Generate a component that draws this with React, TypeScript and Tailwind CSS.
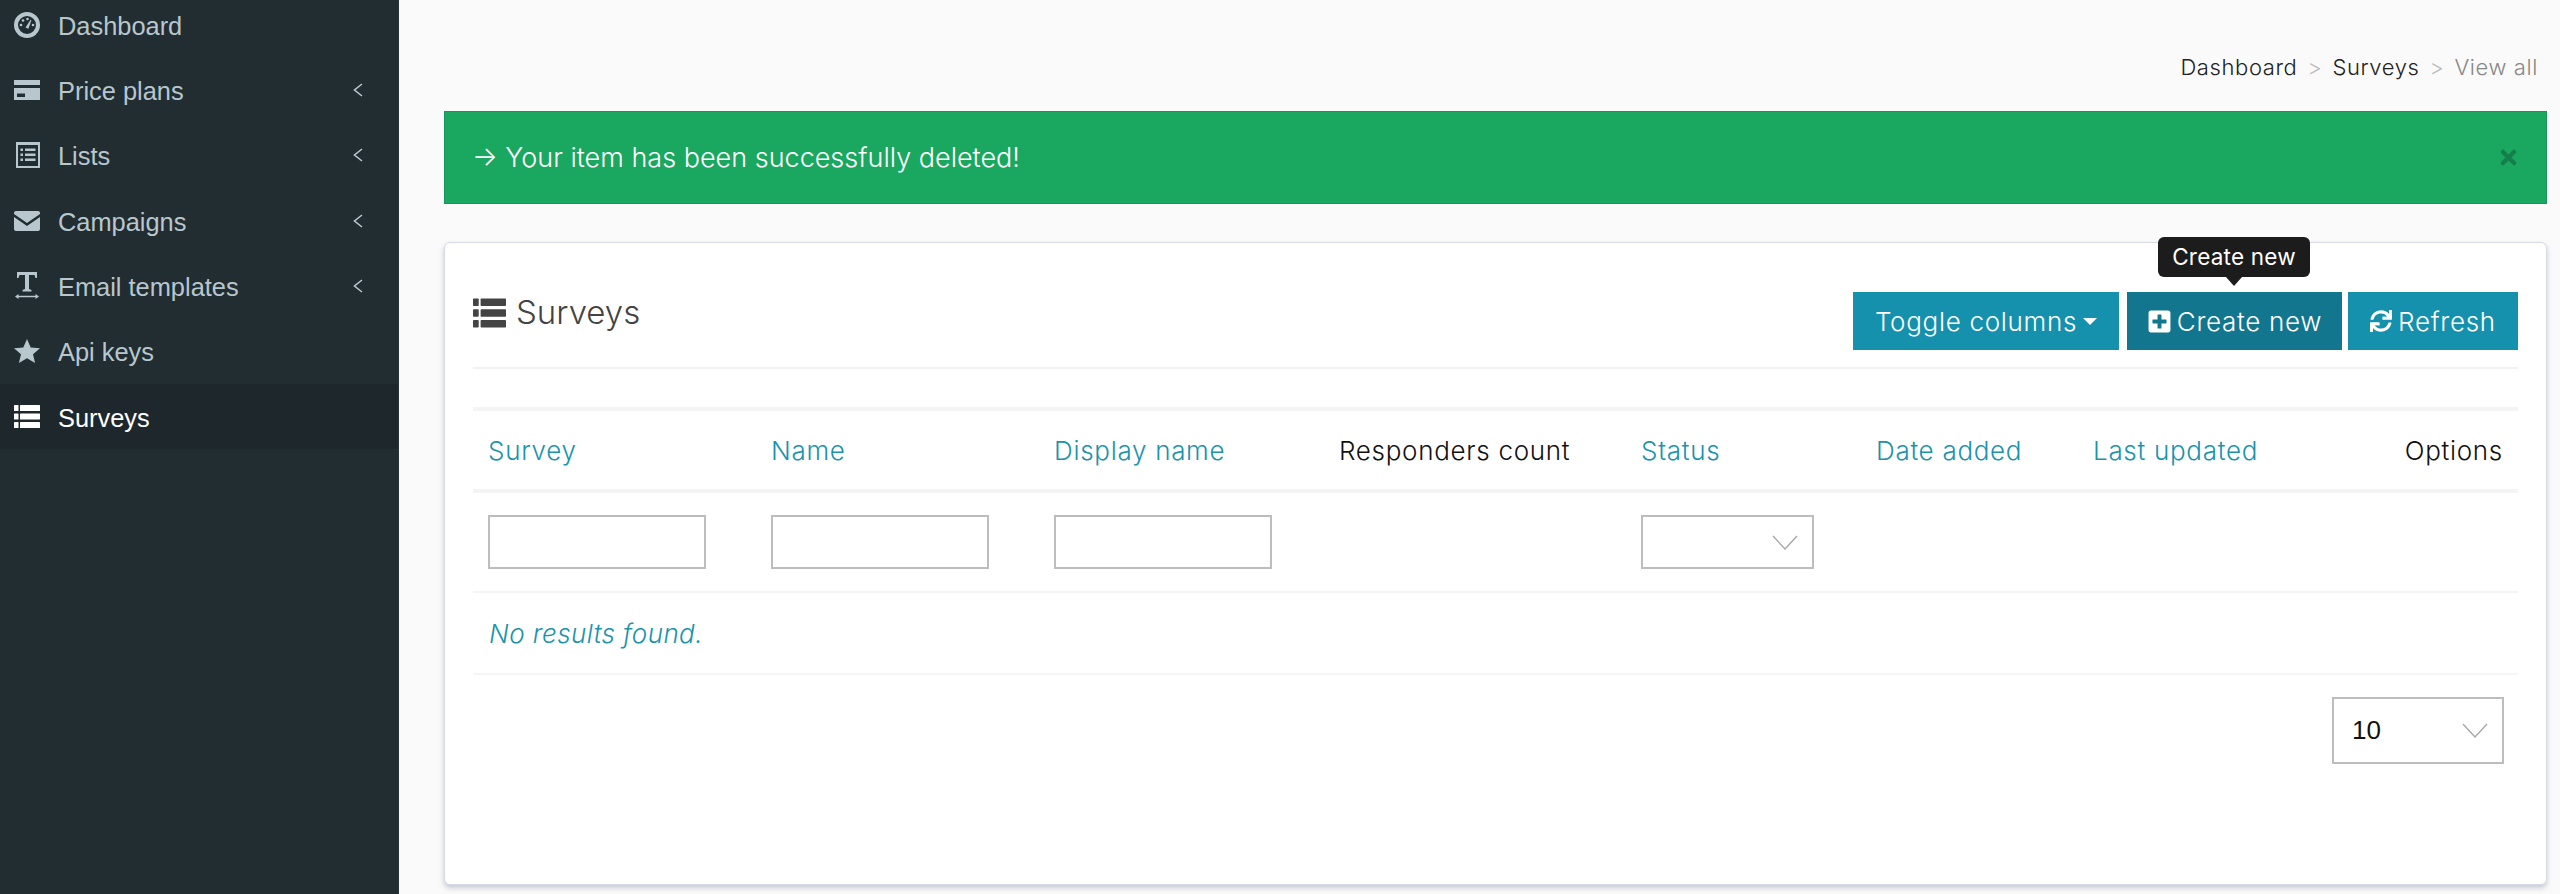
import { FaPlusSquare, FaSync, FaTimes } from "react-icons/fa";

function ListIcon({ className }: { className?: string }) {
  return (
    <svg viewBox="0 0 26 23" className={className} fill="currentColor">
      <rect x="0" y="0" width="4.5" height="6" rx="0.6" />
      <rect x="6" y="0" width="20" height="6" rx="0.6" />
      <rect x="0" y="8.5" width="4.5" height="6" rx="0.6" />
      <rect x="6" y="8.5" width="20" height="6" rx="0.6" />
      <rect x="0" y="17" width="4.5" height="6" rx="0.6" />
      <rect x="6" y="17" width="20" height="6" rx="0.6" />
    </svg>
  );
}

function GaugeIcon() {
  return (
    <svg viewBox="0 0 26 26" className="h-[26px] w-[26px]" fill="currentColor">
      <circle cx="13" cy="13" r="11" fill="none" stroke="currentColor" strokeWidth="4" />
      <circle cx="7" cy="13" r="1.3" />
      <circle cx="9" cy="8.5" r="1.3" />
      <circle cx="13.5" cy="7" r="1.3" />
      <circle cx="19" cy="13" r="1.3" />
      <path d="M11.5 15.5 L16.6 7.8 L17.4 8.3 L14.4 16.8 Z" />
    </svg>
  );
}

function CardIcon() {
  return (
    <svg viewBox="0 0 26 20" className="h-[20px] w-[26px]" fill="currentColor">
      <path d="M0 0h26v5H0z" />
      <path fillRule="evenodd" d="M0 8h26v12H0zM3 13.5v3.5h8v-3.5z" />
    </svg>
  );
}

function ListAltIcon() {
  return (
    <svg viewBox="0 0 24 26" className="ml-[2px] h-[26px] w-[24px]" fill="currentColor">
      <path fillRule="evenodd" d="M0 0h24v26H0zM2 3v21h20V3z" />
      <path d="M4.5 6.5h2.5V9H4.500zM9 6.500h10.500V9H9zM4.500 11.500h2.500V14H4.500zM9 11.500h10.500V14H9zM4.500 16.500h2.500V19H4.500zM9 16.500h10.500V19H9z" />
    </svg>
  );
}

function EnvelopeIcon() {
  return (
    <svg viewBox="0 0 26 20" className="h-[20px] w-[26px]" fill="currentColor">
      <path d="M2 0h22a2 2 0 0 1 2 2v1L13 12 0 3V2a2 2 0 0 1 2-2z" />
      <path d="M0 6l13 9 13-9v12a2 2 0 0 1-2 2H2a2 2 0 0 1-2-2z" />
    </svg>
  );
}

function TextWidthIcon() {
  return (
    <svg viewBox="0 0 24 27" className="h-[27px] w-[24px]" fill="currentColor">
      <path d="M2 0h20v6h-1.500l-1-3H14v14l2.500 1v1.500h-9V18l2.500-1V3H4.500l-1 3H2z" />
      <path d="M0 24.500l3.500-2.500v1.800h17V22l3.500 2.500L20.500 27v-1.800h-17V27z" />
    </svg>
  );
}

function StarIcon() {
  return (
    <svg viewBox="0 0 26 24" className="-ml-[1px] h-[24px] w-[26px]" fill="currentColor">
      <path d="M13 0l3.700 8.400 9.300.8-7 6 2.100 8.800L13 19.300 4.900 24 7 15.200l-7-6 9.300-.8z" />
    </svg>
  );
}

function SelectChevron() {
  return (
    <svg viewBox="0 0 26 15" className="h-[15px] w-[26px]" fill="none" stroke="#a8a8a8" strokeWidth="1.4">
      <path d="M1 1 L13 14 L25 1" />
    </svg>
  );
}

function MenuChevron() {
  return (
    <svg viewBox="0 0 10 14" className="ml-auto mr-[35px] h-[14px] w-[10px]" fill="none" stroke="currentColor" strokeWidth="1.6">
      <path d="M9 1 L1.500 7 L9 13" />
    </svg>
  );
}

const menu = [
  { label: "Dashboard", icon: <GaugeIcon />, sub: false },
  { label: "Price plans", icon: <CardIcon />, sub: true },
  { label: "Lists", icon: <ListAltIcon />, sub: true },
  { label: "Campaigns", icon: <EnvelopeIcon />, sub: true },
  { label: "Email templates", icon: <TextWidthIcon />, sub: true },
  { label: "Api keys", icon: <StarIcon />, sub: false },
  { label: "Surveys", icon: <ListIcon className="h-[23px] w-[26px]" />, sub: false, active: true },
];

function Sidebar() {
  return (
    <aside className="h-[894px] w-[399px] shrink-0 overflow-hidden border-r border-r-[#2a353a] bg-[#222d32] font-['Liberation_Sans',sans-serif] text-[25.4px]">
      <nav className="-mt-[8px]">
        {menu.map((item) => (
          <div
            key={item.label}
            className={
              item.active
                ? "flex h-[65.33px] items-center bg-[#1e282c] pl-[14px] text-white"
                : "flex h-[65.33px] items-center pl-[14px] text-[#b8c7ce]"
            }
          >
            <span className="flex w-[26px] justify-center">{item.icon}</span>
            <span className="ml-[18px] pt-[2px]">{item.label}</span>
            {item.sub && <MenuChevron />}
          </div>
        ))}
      </nav>
    </aside>
  );
}

const columns = [
  { label: "Survey", w: "w-[283px]", link: true },
  { label: "Name", w: "w-[283px]", link: true },
  { label: "Display name", w: "w-[285px]", link: true },
  { label: "Responders count", w: "w-[302px]", link: false },
  { label: "Status", w: "w-[235px]", link: true },
  { label: "Date added", w: "w-[217px]", link: true },
  { label: "Last updated", w: "w-[220px]", link: true },
  { label: "Options", w: "", link: false },
];

function SurveysTable() {
  return (
    <table className="mt-[38px] w-full table-fixed border-t-[4px] border-t-[#f4f4f4] text-[26px] font-light tracking-[0.7px]">
      <thead>
        <tr className="h-[82px] border-b-[4px] border-b-[#f4f4f4]">
          {columns.map((col, i) => (
            <th
              key={col.label}
              className={`${col.w} px-[15px] font-light ${i === 7 ? "text-right" : "text-left"} ${col.link ? "text-[#1a93ad]" : "text-[#111]"}`}
            >
              {col.label}
            </th>
          ))}
        </tr>
      </thead>
      <tbody>
        <tr className="h-[101px] border-b-[2px] border-b-[#f4f4f4]">
          <td className="px-[15px]"><input className="block h-[54px] w-[218px] border-2 border-[#bdbdbd] bg-white" /></td>
          <td className="px-[15px]"><input className="block h-[54px] w-[218px] border-2 border-[#bdbdbd] bg-white" /></td>
          <td className="px-[15px]"><input className="block h-[54px] w-[218px] border-2 border-[#bdbdbd] bg-white" /></td>
          <td />
          <td className="px-[15px]">
            <div className="flex h-[54px] w-[173px] items-center justify-end border-2 border-[#bdbdbd] pr-[14px]">
              <SelectChevron />
            </div>
          </td>
          <td />
          <td />
          <td />
        </tr>
        <tr className="h-[82px] border-b-[2px] border-b-[#f5f5f5]">
          <td colSpan={8} className="px-[16px] italic tracking-[0.4px] text-[#1a93ad]">No results found.</td>
        </tr>
      </tbody>
    </table>
  );
}

export default function App() {
  return (
    <div className="flex h-[894px] w-full overflow-hidden bg-[#fafafa] font-['Inter',sans-serif] text-[#333]">
      <Sidebar />
      <main className="min-w-0 flex-1 pl-[45px] pr-[13px]">
        <div className="flex h-[111px] items-start justify-end pr-[9px] pt-[53px] text-[22px] font-light leading-[28px] tracking-[0.6px]">
          <span className="text-[#222]">Dashboard</span>
          <span className="mx-[10px] text-[#bbb]">&gt;</span>
          <span className="text-[#222]">Surveys</span>
          <span className="mx-[10px] text-[#bbb]">&gt;</span>
          <span className="text-[#888]">View all</span>
        </div>

        <div className="flex h-[93px] items-center justify-between border border-[#179659] bg-[#1aa75f] pl-[27px] pr-[26px] text-[27px] font-light text-white">
          <span className="pt-[2px]">→ Your item has been successfully deleted!</span>
          <FaTimes className="h-[23px] w-[23px] text-[#147f4c]" />
        </div>

        <section className="mt-[38px] h-[643px] rounded-[6px] border border-[#d6dae6] bg-white px-[28px] pt-[49px] shadow-[0_3px_5px_rgba(150,155,170,0.5)]">
          <div className="flex h-[77px] items-start justify-between border-b-[2px] border-b-[#f2f2f2]">
            <h1 className="-mt-[4px] flex items-center text-[33px] font-light text-[#444]">
              <ListIcon className="h-[30px] w-[33px] text-[#444]" />
              <span className="ml-[10px]">Surveys</span>
            </h1>
            <div className="flex h-[58px] text-[26px] font-light tracking-[0.7px] text-white">
              <button className="flex h-full w-[266px] items-center justify-center gap-[6px] bg-[#1590ad]">
                Toggle columns
                <span className="h-0 w-0 border-x-[7px] border-t-[7px] border-x-transparent border-t-white" />
              </button>
              <div className="relative ml-[8px]">
                <button className="flex h-full w-[215px] items-center justify-center gap-[5px] bg-[#12768f]">
                  <FaPlusSquare className="h-[25px] w-[25px]" />
                  Create new
                </button>
                <div className="absolute left-[31px] top-[-55px] flex h-[40px] w-[152px] items-center justify-center rounded-[6px] bg-[#1c1c1c] text-[22.5px] font-normal tracking-[0.2px]">
                  Create new
                  <span className="absolute top-full left-1/2 h-0 w-0 -translate-x-1/2 border-x-[8px] border-t-[9px] border-x-transparent border-t-[#1c1c1c]" />
                </div>
              </div>
              <button className="ml-[6px] flex h-full w-[170px] items-center justify-center gap-[6px] bg-[#1590ad]">
                <FaSync className="h-[22px] w-[22px]" />
                Refresh
              </button>
            </div>
          </div>

          <SurveysTable />

          <div className="mt-[22px] flex justify-end pr-[14px]">
            <div className="flex h-[67px] w-[172px] items-center justify-between border-2 border-[#bdbdbd] pl-[18px] pr-[14px] font-['Liberation_Sans',sans-serif] text-[26px] text-[#111]">
              10
              <SelectChevron />
            </div>
          </div>
        </section>
      </main>
    </div>
  );
}
